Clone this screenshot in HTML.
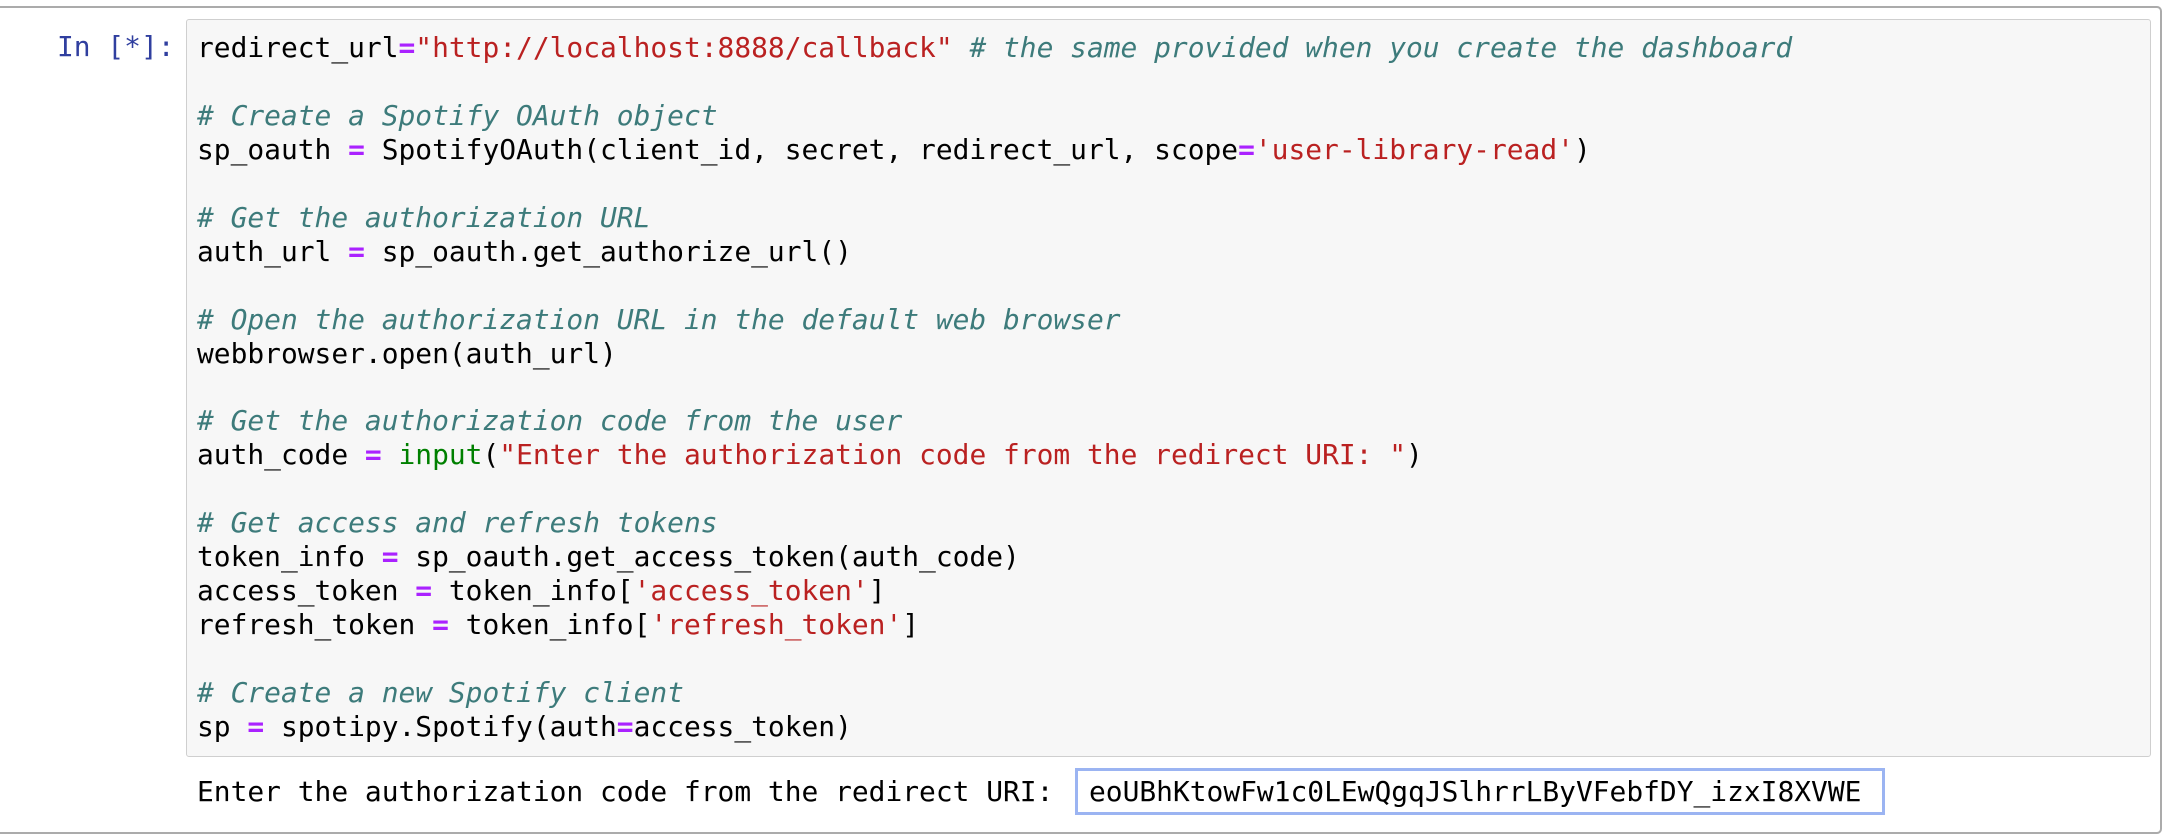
<!DOCTYPE html>
<html><head><style>
html,body{margin:0;padding:0;background:#fff;width:2170px;height:838px;overflow:hidden}
.outer{position:absolute;left:-10px;top:6px;width:2172px;height:828px;border:2px solid #ababab;border-radius:5px;box-sizing:border-box}
.prompt{position:absolute;left:57px;top:30px;font:27.9px/34px "DejaVu Sans Mono",monospace;color:#303f9f}
.code{position:absolute;left:186px;top:19px;width:1965px;height:738px;background:#f7f7f7;border:1.5px solid #cfcfcf;border-radius:3px;box-sizing:border-box}
pre{position:absolute;left:197px;top:31px;margin:0;font:27.9px/33.95px "DejaVu Sans Mono",monospace;color:#000}
.c{color:#3d7b7b;font-style:italic}.s{color:#ba2121}.o{color:#aa22ff;font-weight:bold}.b{color:#008000}
.out{position:absolute;left:197px;top:775px;font:27.9px/34px "DejaVu Sans Mono",monospace}
.inp{position:absolute;left:1075px;top:768px;width:810px;height:47px;border:3px solid #9bb4f2;box-sizing:border-box;font:27.9px/41px "DejaVu Sans Mono",monospace;padding-left:11px;white-space:nowrap}
</style></head><body>
<div class="outer"></div>
<div class="prompt">In [*]:</div>
<div class="code"></div>
<pre>redirect_url<span class="o">=</span><span class="s">"http://localhost:8888/callback"</span> <span class="c"># the same provided when you create the dashboard</span>

<span class="c"># Create a Spotify OAuth object</span>
sp_oauth <span class="o">=</span> SpotifyOAuth(client_id, secret, redirect_url, scope<span class="o">=</span><span class="s">'user-library-read'</span>)

<span class="c"># Get the authorization URL</span>
auth_url <span class="o">=</span> sp_oauth.get_authorize_url()

<span class="c"># Open the authorization URL in the default web browser</span>
webbrowser.open(auth_url)

<span class="c"># Get the authorization code from the user</span>
auth_code <span class="o">=</span> <span class="b">input</span>(<span class="s">"Enter the authorization code from the redirect URI: "</span>)

<span class="c"># Get access and refresh tokens</span>
token_info <span class="o">=</span> sp_oauth.get_access_token(auth_code)
access_token <span class="o">=</span> token_info[<span class="s">'access_token'</span>]
refresh_token <span class="o">=</span> token_info[<span class="s">'refresh_token'</span>]

<span class="c"># Create a new Spotify client</span>
sp <span class="o">=</span> spotipy.Spotify(auth<span class="o">=</span>access_token)</pre>
<div class="out">Enter the authorization code from the redirect URI:</div>
<div class="inp">eoUBhKtowFw1c0LEwQgqJSlhrrLByVFebfDY_izxI8XVWE</div>
</body></html>
